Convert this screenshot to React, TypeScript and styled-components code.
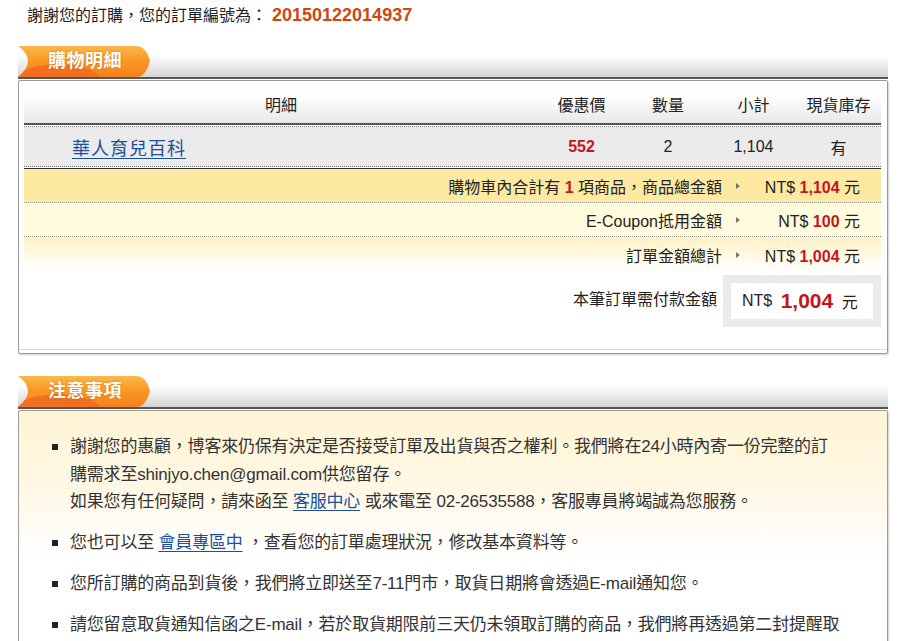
import type { ReactNode } from "react";
import styled, { createGlobalStyle } from "styled-components";

const GlobalStyle = createGlobalStyle`
  body {
    margin: 0;
    background: #fff;
    font-family: "Liberation Sans", "Noto Sans CJK TC", sans-serif;
    color: #222;
  }
`;

type Tone = "strong" | "soft" | "fade";

function SectionHeader({ title }: { title: string }) {
  return (
    <SectionHead>
      <Tab>{title}</Tab>
    </SectionHead>
  );
}

export default function App() {
  const summaryRows: { label: ReactNode; amount: string; tone: Tone }[] = [
    {
      label: (
        <>
          購物車內合計有 <Red>1</Red> 項商品，商品總金額
        </>
      ),
      amount: "1,104",
      tone: "strong",
    },
    { label: "E-Coupon抵用金額", amount: "100", tone: "soft" },
    { label: "訂單金額總計", amount: "1,004", tone: "fade" },
  ];

  return (
    <Page>
      <GlobalStyle />
      <OrderLine>
        謝謝您的訂購，您的訂單編號為：<OrderNo>20150122014937</OrderNo>
      </OrderLine>

      <Section>
        <SectionHeader title="購物明細" />
        <Box>
          <HeadRow>
            <Cell>明細</Cell>
            <Cell>優惠價</Cell>
            <Cell>數量</Cell>
            <Cell>小計</Cell>
            <Cell>現貨庫存</Cell>
          </HeadRow>
          <ProductRow>
            <NameCell>
              <ProductLink href="#">華人育兒百科</ProductLink>
            </NameCell>
            <Cell>
              <Red>552</Red>
            </Cell>
            <Cell>2</Cell>
            <Cell>1,104</Cell>
            <Cell>有</Cell>
          </ProductRow>

          <Summary>
            {summaryRows.map((r, i) => (
              <SumRow key={i} $tone={r.tone}>
                <span>{r.label}</span>
                <ArrowCell>
                  <Arrow />
                </ArrowCell>
                <Amount>
                  NT$ <Red>{r.amount}</Red> 元
                </Amount>
              </SumRow>
            ))}
            <PayRow>
              <PayLabel>本筆訂單需付款金額</PayLabel>
              <PayBox>
                <PayInner>
                  NT$ <BigRed>1,004</BigRed> 元
                </PayInner>
              </PayBox>
            </PayRow>
          </Summary>
        </Box>
      </Section>

      <Section>
        <SectionHeader title="注意事項" />
        <NoticeBox>
          <NoteList>
            <NoteItem>
              <Bullet />
              <NoteText>
                謝謝您的惠顧，博客來仍保有決定是否接受訂單及出貨與否之權利。我們將在24小時內寄一份完整的訂
                <br />
                購需求至shinjyo.chen@gmail.com供您留存。
                <br />
                如果您有任何疑問，請來函至 <NoteLink href="#">客服中心</NoteLink>{" "}
                或來電至 02-26535588，客服專員將竭誠為您服務。
              </NoteText>
            </NoteItem>
            <NoteItem>
              <Bullet />
              <NoteText>
                您也可以至 <NoteLink href="#">會員專區中</NoteLink>{" "}
                ，查看您的訂單處理狀況，修改基本資料等。
              </NoteText>
            </NoteItem>
            <NoteItem>
              <Bullet />
              <NoteText>
                您所訂購的商品到貨後，我們將立即送至7-11門市，取貨日期將會透過E-mail通知您。
              </NoteText>
            </NoteItem>
            <NoteItem>
              <Bullet />
              <NoteText>
                請您留意取貨通知信函之E-mail，若於取貨期限前三天仍未領取訂購的商品，我們將再透過第二封提醒取
              </NoteText>
            </NoteItem>
          </NoteList>
        </NoticeBox>
      </Section>
    </Page>
  );
}

const Page = styled.div`
  width: 870px;
  margin-left: 18px;
`;

const OrderLine = styled.div`
  display: flex;
  align-items: baseline;
  padding: 4px 0 0 9px;
  font-size: 16px;
  line-height: 22px;
  color: #222;
  margin-bottom: 19px;
`;

const OrderNo = styled.span`
  margin-left: 5px;
  font-size: 18px;
  font-weight: bold;
  color: #d0470f;
`;

const Section = styled.section`
  margin-bottom: 22px;
`;

const SectionHead = styled.div`
  display: flex;
  height: 31px;
  border-bottom: 2px solid #555;
  background: linear-gradient(180deg, #fff 0%, #fff 30%, #d4d4d4 100%);
`;

const Tab = styled.div`
  width: 132px;
  height: 31px;
  box-sizing: border-box;
  padding: 4px 0 0 30px;
  font-size: 18px;
  font-weight: bold;
  line-height: 22px;
  color: #fff;
  letter-spacing: 0.5px;
  text-shadow: 0 0 2px rgba(190, 80, 0, 0.6);
  background:
    radial-gradient(ellipse 60px 22px at 40px 34px, #f26f1f 0 70%, transparent 72%),
    linear-gradient(180deg, #fcb84a 0%, #f89a23 45%, #f47f1f 100%);
  clip-path: path("M0 0 H118 Q126 0 130 9 L132 15 L130 21 Q126 31 118 31 H0 Q20 15 0 0 Z");
`;

const Box = styled.div`
  margin-top: 1px;
  border: 1px solid #9a9a9a;
  border-radius: 2px;
  box-shadow: 1px 1px 2px rgba(0, 0, 0, 0.18), inset 0 -3px 0 #fff, inset 0 -4px 0 #ddd;
  background: #fff;
  padding: 0 6px 26px 5px;
`;

const cols = "514px 87px 86px 85px 85px";

const HeadRow = styled.div`
  display: grid;
  grid-template-columns: ${cols};
  height: 44px;
  box-sizing: border-box;
  padding-top: 4px;
  align-items: center;
  font-size: 16px;
  color: #222;
  background: linear-gradient(180deg, #fff 0%, #fdfdfd 40%, #e8e8e8 100%);
  border-bottom: 2px solid #555;
`;

const Cell = styled.div`
  text-align: center;
  font-size: 16px;
`;

const ProductRow = styled.div`
  display: grid;
  grid-template-columns: ${cols};
  height: 41px;
  box-sizing: border-box;
  margin-top: 1px;
  align-items: center;
  background: #ebebeb;
  border-top: 1px dotted #888;
  border-bottom: 1px dotted #777;
  color: #222;
`;

const NameCell = styled.div`
  padding-left: 48px;
`;

const ProductLink = styled.a`
  font-size: 18px;
  letter-spacing: 1px;
  color: #1b4f9c;
  text-decoration: underline;
  text-underline-offset: 3px;
`;

const Red = styled.b`
  color: #c4161c;
`;

const Summary = styled.div`
  margin-top: 1px;
  border-top: 1px solid #333;
`;

const toneBg: Record<Tone, string> = {
  strong: "#fee9a2",
  soft: "#fffbdc",
  fade: "linear-gradient(180deg, #fff2c6 0%, #fffaea 60%, #fff 100%)",
};

const SumRow = styled.div<{ $tone: Tone }>`
  display: flex;
  justify-content: flex-end;
  align-items: center;
  height: ${(p) => (p.$tone === "fade" ? "36px" : "34px")};
  box-sizing: border-box;
  padding-right: 21px;
  font-size: 16px;
  color: #222;
  background: ${(p) => toneBg[p.$tone]};
  border-bottom: ${(p) => (p.$tone === "fade" ? "none" : "1px dotted #999")};
`;

const ArrowCell = styled.span`
  width: 32px;
  display: flex;
  justify-content: center;
`;

const Arrow = styled.span`
  width: 0;
  height: 0;
  border-left: 4px solid #777;
  border-top: 3px solid transparent;
  border-bottom: 3px solid transparent;
`;

const Amount = styled.span`
  width: 106px;
  text-align: right;
  white-space: nowrap;
`;

const PayRow = styled.div`
  display: flex;
  justify-content: flex-end;
  align-items: flex-start;
  margin-top: 2px;
`;

const PayLabel = styled.span`
  padding-top: 11px;
  margin-right: 6px;
  font-size: 16px;
  color: #222;
`;

const PayBox = styled.div`
  width: 158px;
  box-sizing: border-box;
  padding: 8px;
  background: #ebebeb;
`;

const PayInner = styled.div`
  display: flex;
  align-items: center;
  gap: 4px;
  height: 36px;
  padding-left: 11px;
  background: #fff;
  font-size: 16px;
  color: #222;
  white-space: pre;
`;

const BigRed = styled.b`
  font-size: 21px;
  color: #c4161c;
`;

const NoticeBox = styled(Box)`
  padding: 22px 0 0 0;
  box-shadow: 1px 1px 2px rgba(0, 0, 0, 0.18);
  background: linear-gradient(180deg, #fff4d4 0%, #fff8e6 80px, #fffdf8 125px, #fff 150px);
`;

const NoteList = styled.ul`
  list-style: none;
  margin: 0;
  padding: 0;
`;

const NoteItem = styled.li`
  display: flex;
  align-items: flex-start;
  gap: 12px;
  padding-left: 33px;
  margin-bottom: 13.5px;
`;

const Bullet = styled.span`
  flex: none;
  width: 6px;
  height: 6px;
  margin-top: 11px;
  background: #222;
`;

const NoteText = styled.div`
  font-size: 17px;
  line-height: 27.5px;
  letter-spacing: -0.2px;
  color: #333;
  white-space: nowrap;
`;

const NoteLink = styled.a`
  color: #1b4f9c;
  text-decoration: underline;
  text-underline-offset: 3px;
`;
